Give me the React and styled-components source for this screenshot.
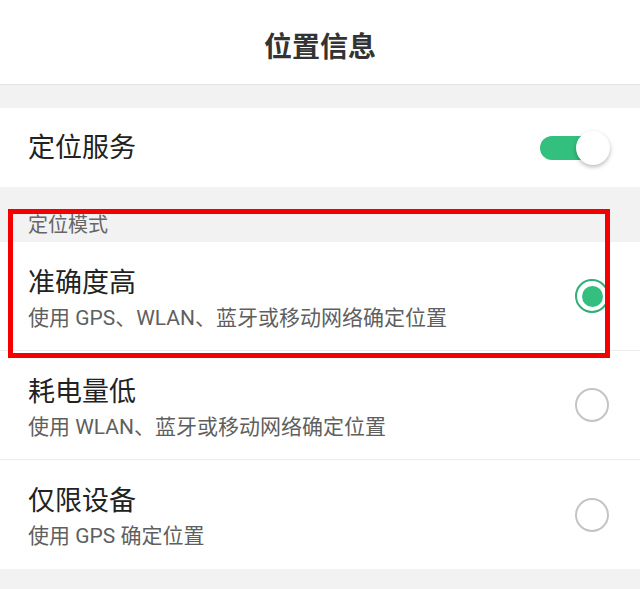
import React, { useState } from "react";
import styled, { createGlobalStyle } from "styled-components";

const GlobalStyle = createGlobalStyle`
  html, body {
    margin: 0;
    padding: 0;
    background: #f2f2f2;
    font-family: Roboto, "Noto Sans CJK SC", sans-serif;
  }
`;

const Page = styled.div`
  position: relative;
  width: 640px;
  height: 589px;
  overflow: hidden;
  background: #f2f2f2;
`;

const Header = styled.header`
  height: 84px;
  display: flex;
  align-items: center;
  justify-content: center;
  background: #fff;
  border-bottom: 1px solid #e3e3e3;
`;

const Title = styled.h1`
  margin: 0;
  padding-top: 6px;
  font-size: 28px;
  font-weight: 700;
  color: #333;
`;

const Gap = styled.div`
  height: 23px;
`;

const SwitchRow = styled.div`
  height: 79px;
  display: flex;
  align-items: center;
  justify-content: space-between;
  padding: 0 28px;
  background: #fff;
`;

const RowTitle = styled.div`
  font-size: 27px;
  line-height: 34px;
  color: #222;
`;

const Track = styled.button`
  position: relative;
  width: 60px;
  height: 24px;
  border: 0;
  padding: 0;
  border-radius: 12px;
  background: ${(p) => (p.$on ? "#33bf7e" : "#ccc")};
  margin-right: 12px;
  cursor: pointer;
`;

const Thumb = styled.span`
  position: absolute;
  top: -5px;
  left: ${(p) => (p.$on ? "36px" : "-8px")};
  width: 34px;
  height: 34px;
  border-radius: 50%;
  background: #fff;
  box-shadow: 0 2px 4px rgba(0, 0, 0, 0.28);
`;

const SectionLabel = styled.div`
  height: 55px;
  display: flex;
  align-items: flex-end;
  padding: 0 28px 4px;
  box-sizing: border-box;
  font-size: 20px;
  color: #666;
`;

const List = styled.div`
  background: #fff;
`;

const OptionRow = styled.div`
  height: 109px;
  display: flex;
  align-items: center;
  justify-content: space-between;
  padding: 0 31px 0 28px;
  box-sizing: border-box;
  border-bottom: ${(p) => (p.$last ? "0" : "1px solid #ececec")};
  cursor: pointer;
`;

const OptionText = styled.div`
  display: flex;
  flex-direction: column;
  gap: 5px;
  padding-top: 4px;
`;

const Sub = styled.div`
  font-size: 21px;
  line-height: 26px;
  color: #5f5f5f;
`;

const Radio = styled.span`
  width: 34px;
  height: 34px;
  box-sizing: border-box;
  border-radius: 50%;
  border: 2px solid ${(p) => (p.$checked ? "#2fae75" : "#c4c4c4")};
  display: flex;
  align-items: center;
  justify-content: center;

  &::after {
    content: "";
    width: 21px;
    height: 21px;
    border-radius: 50%;
    background: #33bf7e;
    display: ${(p) => (p.$checked ? "block" : "none")};
  }
`;

const Highlight = styled.div`
  position: absolute;
  left: 8px;
  top: 209px;
  width: 602px;
  height: 149px;
  box-sizing: border-box;
  border: 5px solid #f40000;
  pointer-events: none;
`;

const MODES = [
  { id: "high", title: "准确度高", desc: "使用 GPS、WLAN、蓝牙或移动网络确定位置" },
  { id: "save", title: "耗电量低", desc: "使用 WLAN、蓝牙或移动网络确定位置" },
  { id: "device", title: "仅限设备", desc: "使用 GPS 确定位置" },
];

export default function App() {
  const [on, setOn] = useState(true);
  const [mode, setMode] = useState("high");

  return (
    <Page>
      <GlobalStyle />
      <Header>
        <Title>位置信息</Title>
      </Header>
      <Gap />
      <SwitchRow>
        <RowTitle>定位服务</RowTitle>
        <Track $on={on} onClick={() => setOn(!on)} aria-label="定位服务">
          <Thumb $on={on} />
        </Track>
      </SwitchRow>
      <SectionLabel>定位模式</SectionLabel>
      <List>
        {MODES.map((m, i) => (
          <OptionRow key={m.id} $last={i === MODES.length - 1} onClick={() => setMode(m.id)}>
            <OptionText>
              <RowTitle>{m.title}</RowTitle>
              <Sub>{m.desc}</Sub>
            </OptionText>
            <Radio $checked={mode === m.id} />
          </OptionRow>
        ))}
      </List>
      <Highlight />
    </Page>
  );
}
